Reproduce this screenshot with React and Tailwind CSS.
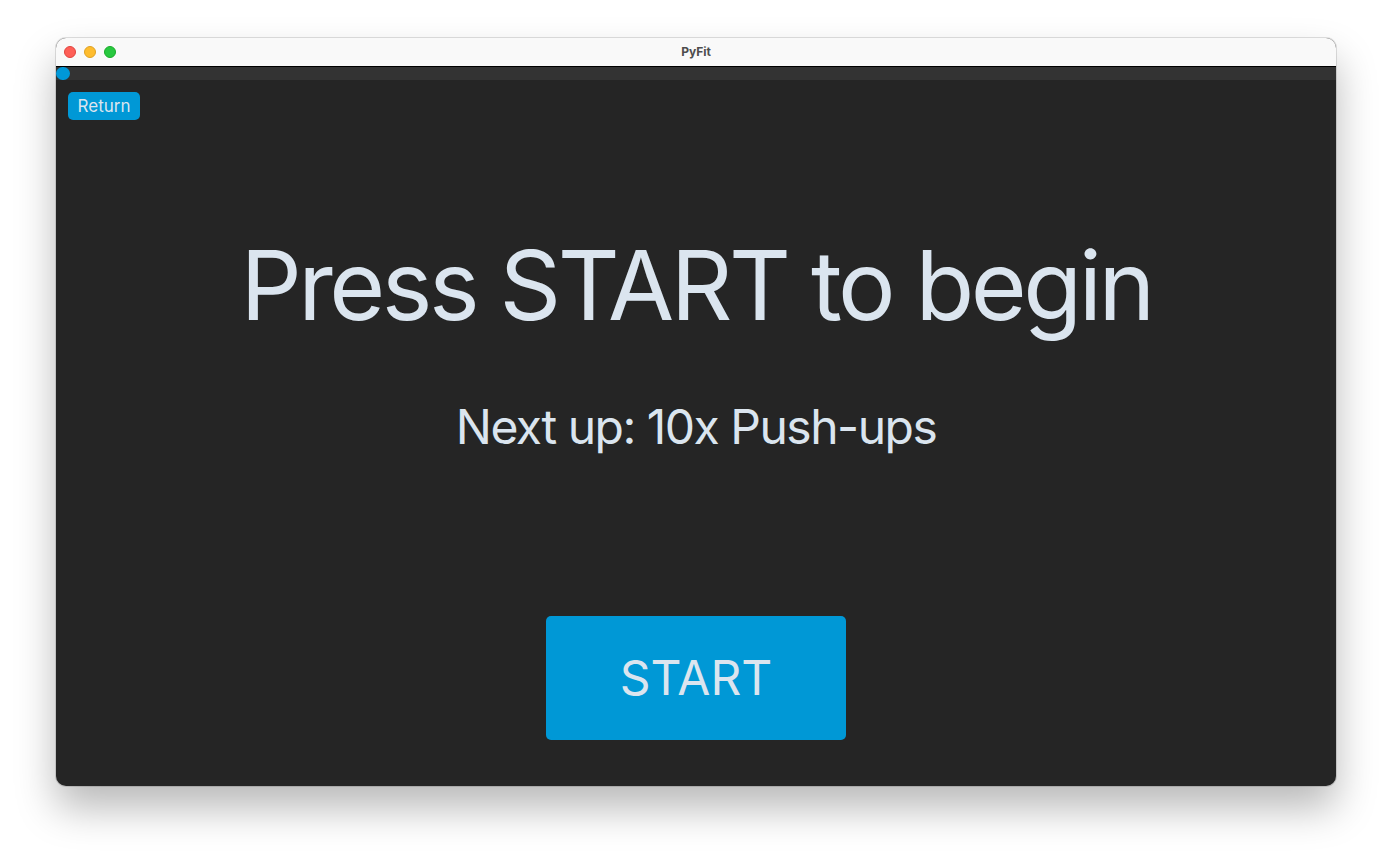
export default function App() {
  return (
    <div className="w-[1392px] h-[860px] bg-white overflow-hidden" style={{ fontFamily: "Inter, 'Noto Sans', sans-serif" }}>
      <div className="ml-[56px] mt-[38px] w-[1280px] h-[748px] rounded-[10px] overflow-hidden flex flex-col shadow-[0_22px_40px_rgba(0,0,0,0.28),0_0_0_1px_rgba(0,0,0,0.12)] bg-[#252525]">
        <div className="h-[29px] bg-[#f9f9f9] border-b border-[#000] flex items-center relative shrink-0">
          <div className="flex gap-[8px] pl-[8px]">
            <span className="w-[12px] h-[12px] rounded-full bg-[#fe5f57] border border-[#e0443e]" />
            <span className="w-[12px] h-[12px] rounded-full bg-[#febc2e] border border-[#dea123]" />
            <span className="w-[12px] h-[12px] rounded-full bg-[#28c840] border border-[#1aab29]" />
          </div>
          <div className="absolute inset-0 flex items-center justify-center text-[12px] font-bold text-[#4d4d4d]">PyFit</div>
        </div>
        <div className="h-[13px] bg-[#333333] shrink-0 relative">
          <span className="absolute left-0 top-0 w-[14px] h-[13px] rounded-full bg-[#0098d8]" />
        </div>
        <div className="flex-1 flex flex-col">
          <div className="pl-[12px] pt-[12px]">
            <button className="h-[28px] w-[72px] rounded-[5px] bg-[#0098d6] text-[#dbe5ef] text-[17px] leading-none">Return</button>
          </div>
          <h1 className="mt-[117px] text-center text-[96px] leading-none font-normal text-[#dbe5ef] tracking-[-3.5px]">Press START to begin</h1>
          <p className="mt-[67px] text-center text-[48px] leading-[54px] text-[#dbe5ef] tracking-[-1.5px]">Next up: 10x Push-ups</p>
          <div className="mt-[162px] flex justify-center">
            <button className="w-[300px] h-[124px] rounded-[5px] bg-[#0098d6] text-[#dbe5ef] text-[48px] leading-none">START</button>
          </div>
        </div>
      </div>
    </div>
  );
}
